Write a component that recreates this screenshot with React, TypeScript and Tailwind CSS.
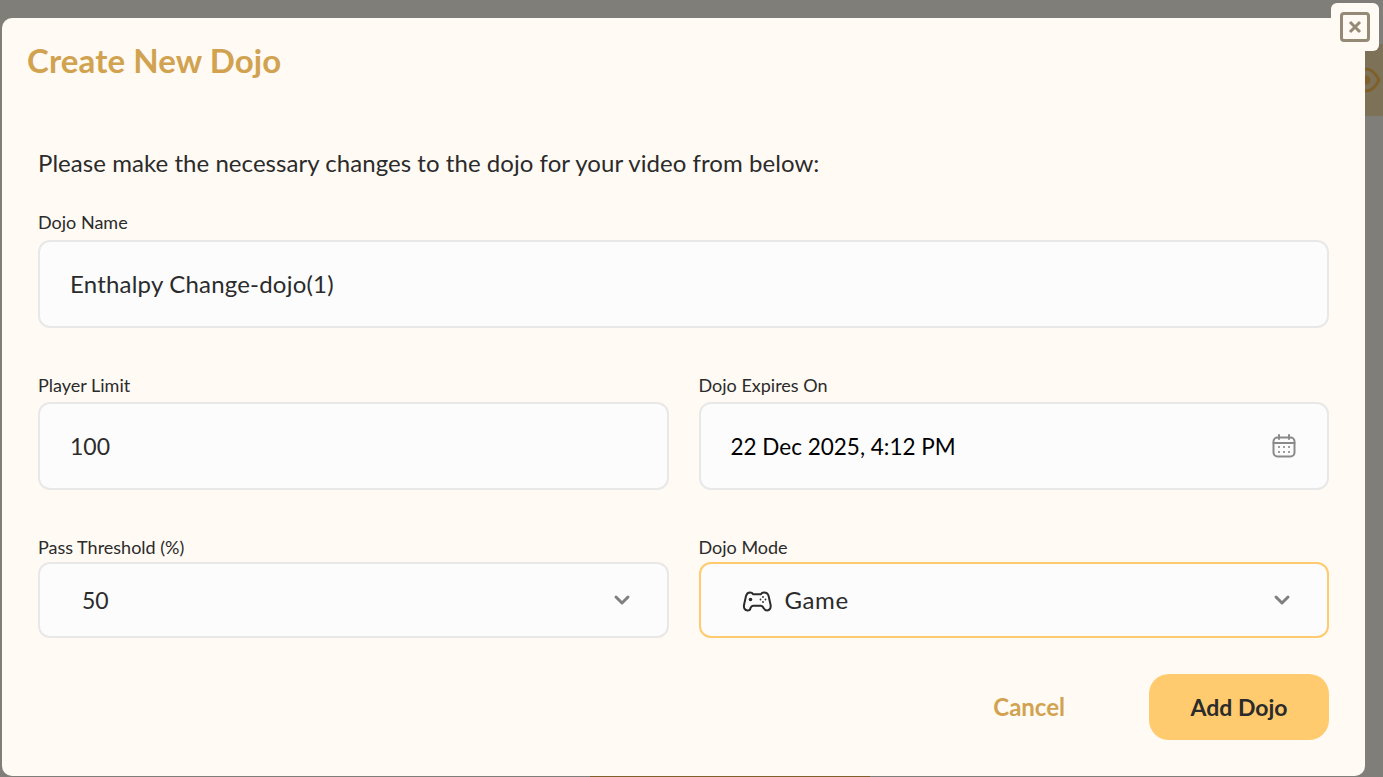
import { ChevronDown } from 'lucide-react';

const font = "font-['Lato','Noto_Sans',sans-serif]";

function Calendar() {
  return (
    <svg width="24" height="24" viewBox="0 0 24 24" fill="none" stroke="#8a8a8a" strokeWidth="2" strokeLinecap="round">
      <rect x="1.5" y="3.5" width="21" height="19" rx="4" />
      <path d="M1.5 9h21M7 1v4M17 1v4" />
      <path d="M7 13h.01M12 13h.01M17 13h.01M7 18h.01M12 18h.01M17 18h.01" strokeWidth="2.2" />
    </svg>
  );
}

function Controller() {
  return (
    <svg width="32" height="24" viewBox="0 0 32 22" fill="none" stroke="#2b2b2b" strokeWidth="2" strokeLinejoin="round" className="mt-[3px]">
      <path d="M8 1.5c1.5 0 2.5.5 3 1.7h8c.5-1.2 1.5-1.7 3-1.7 2.5 0 4 1.2 4.6 3.5l2 9c.5 3-1 5.5-3.5 5.5-1.7 0-2.8-1-3.6-2.4l-.8-1.4c-.4-.7-1-1-1.8-1h-7.8c-.8 0-1.4.3-1.8 1l-.8 1.4C8.3 18.5 7.2 19.5 5.5 19.5 3 19.5 1.5 17 2 14l2-9C4.6 2.7 5.5 1.5 8 1.5Z" />
      <circle cx="8.5" cy="8.5" r="1.8" fill="#2b2b2b" stroke="none" />
      <g fill="#2b2b2b" stroke="none">
        <circle cx="21" cy="6" r=".9" />
        <circle cx="21" cy="11" r=".9" />
        <circle cx="18.5" cy="8.5" r=".9" />
        <circle cx="23.5" cy="8.5" r=".9" />
      </g>
    </svg>
  );
}

function Field({ label, gap, children }: { label: string; gap: string; children: React.ReactNode }) {
  return (
    <div className="flex flex-col">
      <label className={`${gap} h-[20px] text-[18px] leading-[20px] text-[#2b2b2b]`}>{label}</label>
      {children}
    </div>
  );
}

const box = 'flex items-center rounded-[12px] border-2 border-[#e8e8e8] bg-[#fcfcfd] text-[#2b2b2b]';

export default function App() {
  return (
    <div className={`relative h-[777px] w-[1383px] overflow-hidden bg-[#7f7e79] ${font}`}>
      {/* page peeking out behind the modal */}
      <div className="absolute left-[1365px] top-[44px] flex h-[72px] w-[18px] items-center bg-[#7d7258]">
        <svg width="30" height="28" viewBox="0 0 30 28" fill="none" stroke="#80602a" strokeWidth="3" className="shrink-0 -translate-x-[14px]">
          <path d="M2 14C6 6 11 3 15 3s9 3 13 11c-4 8-9 11-13 11S6 22 2 14Z" />
          <circle cx="15" cy="14" r="3" fill="#80602a" />
        </svg>
      </div>
      <div className="absolute left-[590px] top-[776px] h-[1px] w-[280px] bg-[#80602a]" />

      <div className="absolute left-[1331px] top-[3px] z-10 flex h-[48px] w-[48px] items-center justify-center rounded-[6px] bg-[#fffaf4]">
        <div className="flex h-[30px] w-[30px] items-center justify-center rounded-[4px] border-[3px] border-[#958a76]">
          <svg width="14" height="14" viewBox="0 0 14 14" stroke="#958a76" strokeWidth="3">
            <path d="M2 2l10 10M12 2L2 12" />
          </svg>
        </div>
      </div>

      <div className="absolute left-[2px] top-[18px] h-[758px] w-[1363px] rounded-[10px] bg-[#fffaf4]">
        <h2 className="ml-[25px] mt-[22px] h-[40px] text-[33px] font-bold leading-[40px] tracking-[0.1px] text-[#d1a350]">Create New Dojo</h2>
        <div className="px-[36px]">
          <p className="mt-[66px] h-[34px] text-[24px] leading-[34px] tracking-[0.05px] text-[#2b2b2b]">
            Please make the necessary changes to the dojo for your video from below:
          </p>
          <div className="mt-[32px]">
            <Field label="Dojo Name" gap="mb-[8px]">
              <div className={`${box} h-[88px] pl-[30px] text-[24px] tracking-[0.2px]`}>Enthalpy Change-dojo(1)</div>
            </Field>
          </div>
          <div className="mt-[47px] grid grid-cols-2 gap-x-[30px]">
            <Field label="Player Limit" gap="mb-[7px]">
              <div className={`${box} h-[88px] pl-[30px] text-[23px]`}>100</div>
            </Field>
            <Field label="Dojo Expires On" gap="mb-[7px]">
              <div className={`${box} h-[88px] justify-between pl-[30px] pr-[31px] text-[22.5px] !text-black`}>
                <span className="pt-[2px]">22 Dec 2025, 4:12 PM</span>
                <Calendar />
              </div>
            </Field>
          </div>
          <div className="mt-[47px] grid grid-cols-2 gap-x-[30px]">
            <Field label="Pass Threshold (%)" gap="mb-[5px]">
              <div className={`${box} h-[76px] justify-between pl-[42px] pr-[33px] text-[23px]`}>
                50
                <ChevronDown size={24} strokeWidth={3} color="#808080" />
              </div>
            </Field>
            <Field label="Dojo Mode" gap="mb-[5px]">
              <div className={`${box} h-[76px] justify-between !border-[#ffcb6e] pl-[41px] pr-[33px] text-[24px] tracking-[0.6px]`}>
                <span className="flex items-center gap-[11px]">
                  <Controller />
                  Game
                </span>
                <ChevronDown size={24} strokeWidth={3} color="#808080" />
              </div>
            </Field>
          </div>
          <div className="mt-[36px] flex items-center justify-end">
            <button className="mr-[84px] text-[24px] font-bold text-[#d1a350]">Cancel</button>
            <button className="h-[66px] w-[180px] rounded-[20px] bg-[#ffcb6e] text-[23px] font-bold text-[#2b2b2b]">Add Dojo</button>
          </div>
        </div>
      </div>
    </div>
  );
}
